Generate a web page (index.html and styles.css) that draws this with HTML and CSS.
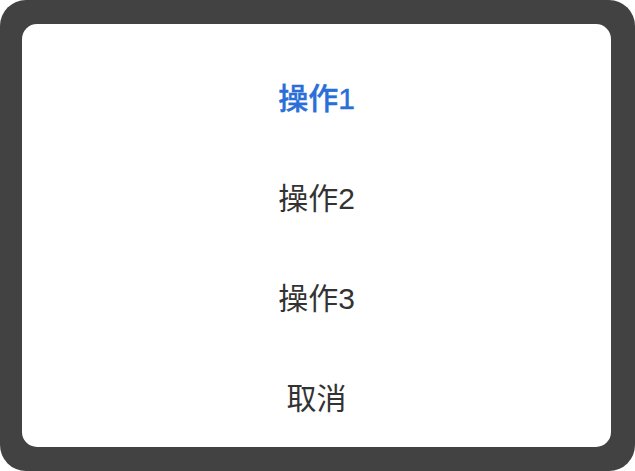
FILE: index.html
```html
<!DOCTYPE html>
<html lang="zh">
<head>
<meta charset="utf-8">
<link rel="stylesheet" href="styles.css">
</head>
<body>
<div class="frame">
  <div class="sheet">
    <div class="item item-active">操作1</div>
    <div class="item">操作2</div>
    <div class="item">操作3</div>
    <div class="item">取消</div>
  </div>
</div>
</body>
</html>
```
FILE: styles.css
```css
html, body {
  margin: 0;
  padding: 0;
  background: #ffffff;
}
.frame {
  box-sizing: border-box;
  width: 635px;
  height: 471px;
  background: #424242;
  border-radius: 26px;
  padding: 24px 24px 24px 22px;
}
.sheet {
  height: 423px;
  background: #ffffff;
  border-radius: 15px;
  overflow: hidden;
  padding-top: 22px;
  box-sizing: border-box;
  display: flex;
  flex-direction: column;
}
.item {
  flex: 0 0 100px;
  height: 100px;
  display: flex;
  align-items: center;
  justify-content: center;
  font-family: "Liberation Sans", "Noto Sans CJK SC", sans-serif;
  font-size: 30px;
  color: #333333;
}
.item-active {
  color: #2a6fd8;
  font-weight: 500;
  -webkit-text-stroke: 0.4px #2a6fd8;
}
```
